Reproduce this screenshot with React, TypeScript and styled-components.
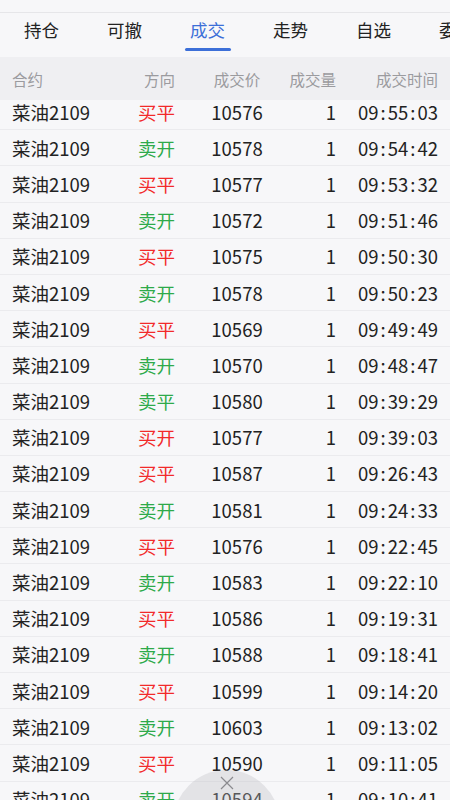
import styled, { createGlobalStyle } from "styled-components";

const GlobalStyle = createGlobalStyle`
  html, body {
    margin: 0;
    padding: 0;
    background: #f7f7f9;
    font-family: "Noto Sans CJK SC", "Noto Sans", sans-serif;
    color: #222;
  }
  body {
    height: 800px;
    overflow: hidden;
  }
`;

const Page = styled.div`
  width: 450px;
  height: 800px;
  overflow: hidden;
  position: relative;
  background: #f7f7f9;
`;

const TopStrip = styled.div`
  height: 12px;
  border-bottom: 1px solid #e6e6e9;
`;

const TabBar = styled.div`
  height: 44px;
  display: flex;
  overflow: hidden;
`;

const Tab = styled.div<{ $active?: boolean }>`
  flex: 0 0 83px;
  display: flex;
  flex-direction: column;
  align-items: center;
  padding-top: 6px;
  font-size: 17.5px;
  line-height: 22px;
  color: ${(p) => (p.$active ? "#3c6fd8" : "#222")};
`;

const Underline = styled.div<{ $active?: boolean }>`
  width: 46px;
  height: 3px;
  margin-top: 7px;
  border-radius: 2px;
  background: ${(p) => (p.$active ? "#3c6fd8" : "transparent")};
`;

const Grid = styled.div`
  display: grid;
  grid-template-columns: 100px 76px 98px 50px 1fr;
  padding: 0 12px;
  align-items: center;
`;

const Header = styled(Grid)`
  position: relative;
  z-index: 1;
  height: 43px;
  background: #efeff2;
  font-size: 15.5px;
  color: #9b9b9f;
`;

const List = styled.div`
  margin-top: -6px;
`;

const Row = styled(Grid)`
  height: 36.2px;
  box-sizing: border-box;
  border-bottom: 1px solid #ebebee;
  font-size: 18.5px;
  color: #222;
`;

const Cell = styled.div<{ $align?: "left" | "right" | "center" }>`
  text-align: ${(p) => p.$align || "left"};
  white-space: nowrap;
`;

const Side = styled(Cell)<{ $buy: boolean }>`
  padding-right: 13px;
  color: ${(p) => (p.$buy ? "#f22a2a" : "#2eaa4a")};
`;

const HeadSide = styled(Cell)`
  padding-right: 13px;
`;

const Colon = styled.span`
  margin: 0 2px;
`;

const Bubble = styled.div`
  position: absolute;
  left: 173px;
  top: 770px;
  width: 107px;
  height: 107px;
  border-radius: 50%;
  background: rgba(190, 190, 194, 0.35);
  display: flex;
  justify-content: center;
  padding-top: 6px;
  box-sizing: border-box;
`;

const tabs = ["持仓", "可撤", "成交", "走势", "自选", "委托"];

const trades: [string, string, string][] = [
  ["买平", "10576", "09:55:03"],
  ["卖开", "10578", "09:54:42"],
  ["买平", "10577", "09:53:32"],
  ["卖开", "10572", "09:51:46"],
  ["买平", "10575", "09:50:30"],
  ["卖开", "10578", "09:50:23"],
  ["买平", "10569", "09:49:49"],
  ["卖开", "10570", "09:48:47"],
  ["卖平", "10580", "09:39:29"],
  ["买开", "10577", "09:39:03"],
  ["买平", "10587", "09:26:43"],
  ["卖开", "10581", "09:24:33"],
  ["买平", "10576", "09:22:45"],
  ["卖开", "10583", "09:22:10"],
  ["买平", "10586", "09:19:31"],
  ["卖开", "10588", "09:18:41"],
  ["买平", "10599", "09:14:20"],
  ["卖开", "10603", "09:13:02"],
  ["买平", "10590", "09:11:05"],
  ["卖开", "10594", "09:10:41"],
];

const Time = ({ t }: { t: string }) => {
  const parts = t.split(":");
  return (
    <>
      {parts.map((p, i) => (
        <span key={i}>
          {i > 0 && <Colon>:</Colon>}
          {p}
        </span>
      ))}
    </>
  );
};

const App = () => {
  return (
    <Page>
      <GlobalStyle />
      <TopStrip />
      <TabBar>
        {tabs.map((t) => (
          <Tab key={t} $active={t === "成交"}>
            {t}
            <Underline $active={t === "成交"} />
          </Tab>
        ))}
      </TabBar>
      <Header>
        <Cell>合约</Cell>
        <HeadSide $align="right">方向</HeadSide>
        <Cell $align="center">成交价</Cell>
        <Cell $align="right">成交量</Cell>
        <Cell $align="right">成交时间</Cell>
      </Header>
      <List>
        {trades.map(([side, price, time], i) => (
          <Row key={i}>
            <Cell>菜油2109</Cell>
            <Side $align="right" $buy={side.startsWith("买")}>
              {side}
            </Side>
            <Cell $align="center">{price}</Cell>
            <Cell $align="right">1</Cell>
            <Cell $align="right">
              <Time t={time} />
            </Cell>
          </Row>
        ))}
      </List>
      <Bubble>
        <svg width="16" height="14" viewBox="0 0 16 14">
          <path d="M2 1 L14 13 M14 1 L2 13" stroke="#8a8a8e" strokeWidth="1.2" fill="none" />
        </svg>
      </Bubble>
    </Page>
  );
};

export default App;
